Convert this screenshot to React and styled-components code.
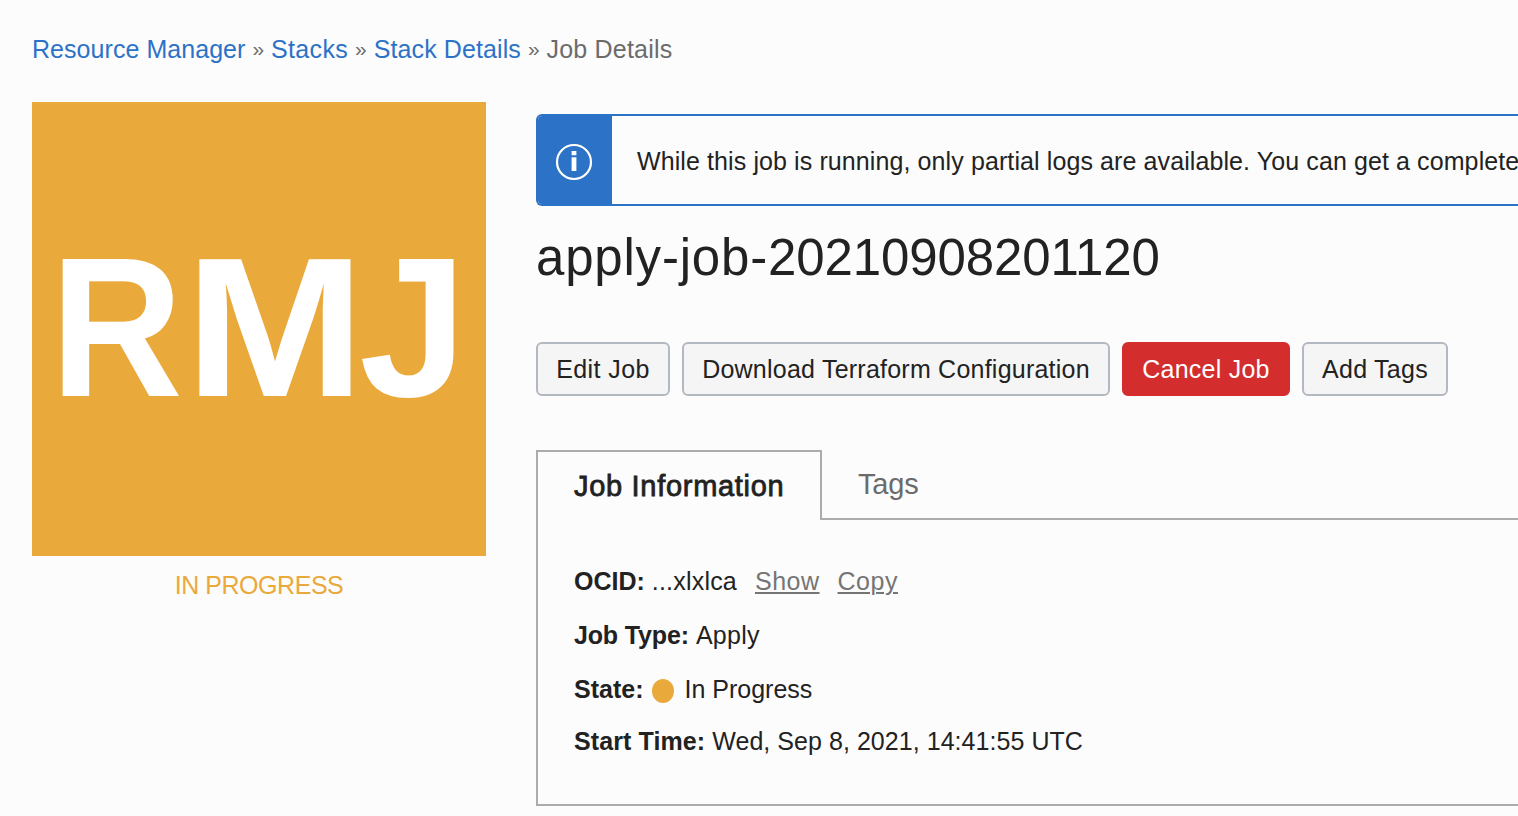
import React from 'react';
import styled, { createGlobalStyle } from 'styled-components';

const Global = createGlobalStyle`
  * { box-sizing: border-box; }
  body {
    margin: 0;
    background: #fcfcfc;
    color: #222;
    font-family: "Liberation Sans", Arial, sans-serif;
    font-size: 25px;
    line-height: 30px;
    overflow: hidden;
  }
`;

const Page = styled.div`
  width: 100%;
  height: 816px;
  padding: 34px 0 0 32px;
  overflow: hidden;
`;
const Crumbs = styled.nav`
  display: flex;
  height: 30px;
  margin-bottom: 38px;
  color: #6b6b6b;
  white-space: nowrap;
`;
const Crumb = styled.span`
  color: ${(p) => (p.$link ? '#2c72c7' : '#6b6b6b')};
  letter-spacing: ${(p) => p.$ls}px;
`;
const Sep = styled.span`
  width: 25.6px;
  text-align: center;
  font-size: 21px;
`;
const Body = styled.div`
  display: flex;
  gap: 50px;
`;
const Side = styled.aside`
  flex: 0 0 454px;
  min-width: 0;
  text-align: center;
`;
const Tile = styled.div`
  display: flex;
  align-items: center;
  height: 454px;
  padding: 0 31px 4px;
  background: #eaa93b;
  color: #fff;
  font-size: 199px;
  font-weight: 700;
`;
const Letter = styled.span`
  display: flex;
  justify-content: center;
  flex: 0 0 ${(p) => p.$w}px;
  min-width: 0;
  margin-right: ${(p) => p.$gap || 0}px;
  transform: translateX(${(p) => p.$dx}px) scaleX(${(p) => p.$sx});
`;
const Status = styled.div`
  margin-top: 14px;
  color: #eaa93b;
  letter-spacing: -0.45px;
`;
const Main = styled.main`
  flex: 1;
  min-width: 0;
  padding-top: 12px;
`;
const Alert = styled.div`
  display: flex;
  height: 92px;
  border: 2px solid #2c72c7;
  border-right: 0;
  border-radius: 6px 0 0 6px;
  overflow: hidden;
`;
const AlertIcon = styled.div`
  flex: 0 0 74px;
  display: flex;
  align-items: center;
  justify-content: center;
  padding: 4px 2px 0 0;
  background: #2c72c7;
`;
const AlertText = styled.div`
  padding: 30px 0 0 25px;
  white-space: nowrap;
  letter-spacing: 0.1px;
`;
const Title = styled.h1`
  margin: 22px 0 0;
  height: 60px;
  font-size: 51px;
  font-weight: 400;
  line-height: 60px;
  letter-spacing: -0.1px;
`;
const TitlePrefix = styled.span`
  letter-spacing: 0.8px;
`;
const Actions = styled.div`
  display: flex;
  gap: 12px;
  margin-top: 54px;
`;
const Button = styled.button`
  width: ${(p) => p.$w}px;
  height: 54px;
  padding: 0;
  border: 2px solid ${(p) => (p.$danger ? '#d42d2d' : '#b3b9c0')};
  border-radius: 6px;
  background: ${(p) => (p.$danger ? '#d42d2d' : '#f5f5f5')};
  color: ${(p) => (p.$danger ? '#fff' : '#222')};
  font: inherit;
  letter-spacing: ${(p) => p.$ls}px;
  white-space: nowrap;
`;
const Tabs = styled.div`
  display: flex;
  margin-top: 54px;
  height: 70px;
  font-size: 29px;
`;
const ActiveTab = styled.div`
  width: 286px;
  padding: 19px 0 0 36px;
  border: 2px solid #acacac;
  border-bottom: 0;
  white-space: nowrap;
  -webkit-text-stroke: 0.8px #222;
  letter-spacing: 0.7px;
`;
const Tab = styled.div`
  flex: 1;
  padding: 19px 0 0 36px;
  border-bottom: 2px solid #acacac;
  color: #6b6b6b;
  letter-spacing: -0.2px;
`;
const Panel = styled.div`
  height: 286px;
  padding: 46px 0 0 36px;
  border: 2px solid #acacac;
  border-top: 0;
  border-right: 0;
`;
const Row = styled.div`
  display: flex;
  height: ${(p) => p.$h || 54}px;
  white-space: nowrap;
`;
const Label = styled.b`
  letter-spacing: ${(p) => p.$ls}px;
  margin-right: 7px;
`;
const Value = styled.span`
  letter-spacing: ${(p) => p.$ls}px;
`;
const Action = styled.a`
  margin-left: 18px;
  color: #757575;
  text-decoration: underline;
  text-decoration-thickness: 2px;
  text-underline-offset: 2px;
  letter-spacing: 0.5px;
`;
const Dot = styled.span`
  width: 22px;
  height: 24px;
  margin: 5px 10px 0 2px;
  border-radius: 50%;
  background: #eaa93b;
`;

export default function App() {
  return (
    <Page>
      <Global />
      <Crumbs>
        <Crumb $link $ls={0.05}>Resource Manager</Crumb>
        <Sep>»</Sep>
        <Crumb $link $ls={0.35}>Stacks</Crumb>
        <Sep>»</Sep>
        <Crumb $link $ls={0.1}>Stack Details</Crumb>
        <Sep>»</Sep>
        <Crumb $ls={0.2}>Job Details</Crumb>
      </Crumbs>
      <Body>
        <Side>
          <Tile>
            <Letter $w={118} $gap={20} $dx={-5.3} $sx={0.92}>R</Letter>
            <Letter $w={148} $gap={14} $dx={0} $sx={1.085}>M</Letter>
            <Letter $w={92} $dx={4} $sx={0.97}>J</Letter>
          </Tile>
          <Status>IN PROGRESS</Status>
        </Side>
        <Main>
          <Alert>
            <AlertIcon>
              <svg width="38" height="38" viewBox="0 0 38 38" fill="none">
                <circle cx="19" cy="19" r="17" stroke="#fff" strokeWidth="2.2" />
                <path d="M16.6 8h4.8v4.3h-4.8zM16.6 14.3h4.8v13.7h-4.8z" fill="#fff" />
              </svg>
            </AlertIcon>
            <AlertText>While this job is running, only partial logs are available. You can get a complete</AlertText>
          </Alert>
          <Title><TitlePrefix>apply-job-</TitlePrefix>20210908201120</Title>
          <Actions>
            <Button $w={134} $ls={0.4}>Edit Job</Button>
            <Button $w={428} $ls={0.23}>Download Terraform Configuration</Button>
            <Button $w={168} $ls={0.25} $danger>Cancel Job</Button>
            <Button $w={146} $ls={0.25}>Add Tags</Button>
          </Actions>
          <Tabs>
            <ActiveTab>Job Information</ActiveTab>
            <Tab>Tags</Tab>
          </Tabs>
          <Panel>
            <Row>
              <Label $ls={0}>OCID:</Label>
              <Value $ls={0.2}>...xlxlca</Value>
              <Action>Show</Action>
              <Action>Copy</Action>
            </Row>
            <Row>
              <Label $ls={-0.15}>Job Type:</Label>
              <Value $ls={0.3}>Apply</Value>
            </Row>
            <Row $h={52}>
              <Label $ls={0}>State:</Label>
              <Dot />
              <Value $ls={0}>In Progress</Value>
            </Row>
            <Row>
              <Label $ls={0.1}>Start Time:</Label>
              <Value $ls={0.05}>Wed, Sep 8, 2021, 14:41:55 UTC</Value>
            </Row>
          </Panel>
        </Main>
      </Body>
    </Page>
  );
}
